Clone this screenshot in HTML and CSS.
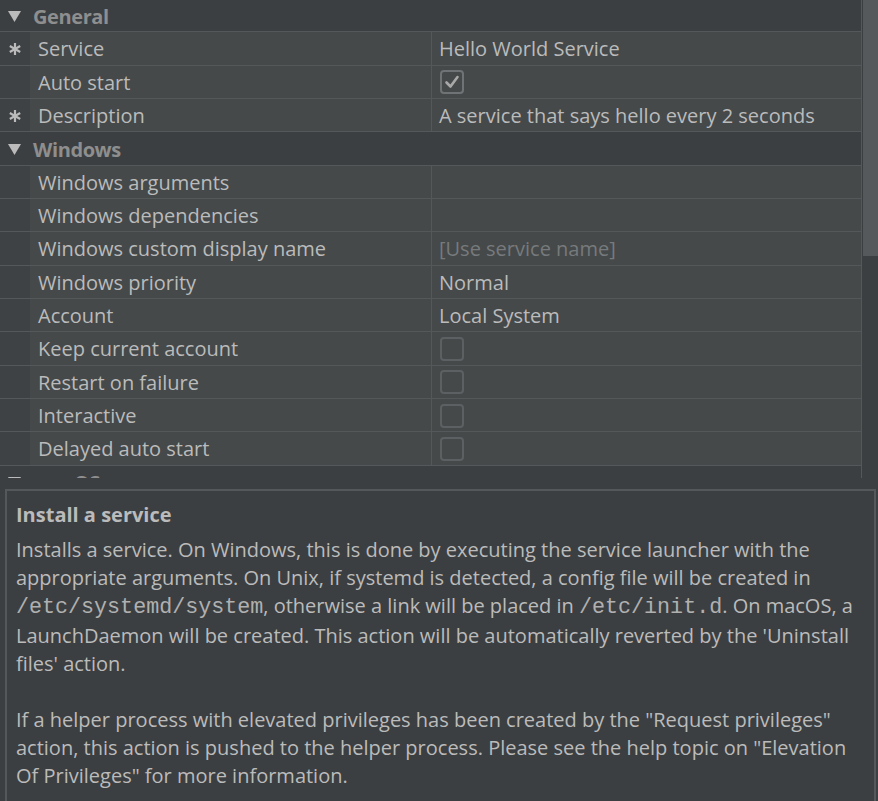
FILE: index.html
```html
<!DOCTYPE html>
<html>
<head>
<meta charset="utf-8">
<link rel="stylesheet" href="styles.css">
</head>
<body>
<div class="app">
  <div class="table-pane">
    <div class="table-scroll">
      <div class="table-inner">
        <div class="hdr"><svg class="tri" viewBox="0 0 12 12"><polygon points="0,1 12,1 6,11"/></svg><span>General</span></div>
        <div class="row"><div class="gut"><svg class="ast" viewBox="0 0 14 14"><g><line x1="7" y1="1" x2="7" y2="13"/><line x1="1.8" y1="4" x2="12.2" y2="10"/><line x1="1.8" y1="10" x2="12.2" y2="4"/></g></svg></div><div class="name">Service</div><div class="val">Hello World Service</div></div>
        <div class="row"><div class="gut"></div><div class="name">Auto start</div><div class="val"><span class="cb on"><svg viewBox="0 0 20 20"><polyline points="4.5,10.5 8.5,14.5 15.5,5"/></svg></span></div></div>
        <div class="row"><div class="gut"><svg class="ast" viewBox="0 0 14 14"><g><line x1="7" y1="1" x2="7" y2="13"/><line x1="1.8" y1="4" x2="12.2" y2="10"/><line x1="1.8" y1="10" x2="12.2" y2="4"/></g></svg></div><div class="name">Description</div><div class="val">A service that says hello every 2 seconds</div></div>
        <div class="hdr"><svg class="tri" viewBox="0 0 12 12"><polygon points="0,1 12,1 6,11"/></svg><span>Windows</span></div>
        <div class="row"><div class="gut"></div><div class="name">Windows arguments</div><div class="val"></div></div>
        <div class="row"><div class="gut"></div><div class="name">Windows dependencies</div><div class="val"></div></div>
        <div class="row"><div class="gut"></div><div class="name">Windows custom display name</div><div class="val dim">[Use service name]</div></div>
        <div class="row"><div class="gut"></div><div class="name">Windows priority</div><div class="val">Normal</div></div>
        <div class="row"><div class="gut"></div><div class="name">Account</div><div class="val">Local System</div></div>
        <div class="row"><div class="gut"></div><div class="name">Keep current account</div><div class="val"><span class="cb"></span></div></div>
        <div class="row"><div class="gut"></div><div class="name">Restart on failure</div><div class="val"><span class="cb"></span></div></div>
        <div class="row"><div class="gut"></div><div class="name">Interactive</div><div class="val"><span class="cb"></span></div></div>
        <div class="row"><div class="gut"></div><div class="name">Delayed auto start</div><div class="val"><span class="cb"></span></div></div>
        <div class="hdr"><svg class="tri" viewBox="0 0 12 12"><polygon points="0,1 12,1 6,11"/></svg><span>macOS</span></div>
      </div>
    </div>
    <div class="scrollbar"><div class="thumb"></div></div>
  </div>
  <div class="help">
    <div class="title">Install a service</div>
    <p>Installs a service. On Windows, this is done by executing the service launcher with the<br>appropriate arguments. On Unix, if systemd is detected, a config file will be created in<br><code>/etc/systemd/system</code>, otherwise a link will be placed in <code>/etc/init.d</code>. On macOS, a<br>LaunchDaemon will be created. This action will be automatically reverted by the 'Uninstall<br>files' action.</p>
    <p class="p2">If a helper process with elevated privileges has been created by the "Request privileges"<br>action, this action is pushed to the helper process. Please see the help topic on "Elevation<br>Of Privileges" for more information.</p>
  </div>
</div>
</body>
</html>
```

FILE: styles.css
```css
html, body {
  margin: 0;
  padding: 0;
  background: #3c3f41;
}
body {
  font-family: "Open Sans", "Noto Sans", sans-serif;
  font-size: 20px;
  color: #bbbbbb;
}
.app {
  width: 878px;
  height: 801px;
  display: flex;
  flex-direction: column;
  overflow: hidden;
}
.table-pane {
  height: 478px;
  display: flex;
  flex: none;
}
.table-scroll {
  width: 862px;
  overflow: hidden;
  border-right: 1px solid #55585a;
  box-sizing: border-box;
}
.table-inner {
  margin-top: -1px;
}
.hdr {
  height: 33.33px;
  box-sizing: border-box;
  border-bottom: 1px solid #55585a;
  display: flex;
  align-items: center;
  background: #3c3f41;
  padding-top: 2px;
}
.hdr .tri {
  width: 13px;
  height: 13px;
  margin-left: 8px;
  margin-right: 12px;
  fill: #bbbbbb;
}
.hdr span {
  font-weight: 700;
  color: #8e8e8e;
  letter-spacing: -0.4px;
}
.row {
  height: 33.33px;
  box-sizing: border-box;
  border-bottom: 1px solid #55585a;
  display: grid;
  grid-template-columns: 30px 401px 1fr;
  background: #45494a;
}
.gut {
  background: #3e4244;
  display: flex;
  align-items: center;
  justify-content: center;
  padding-top: 2px;
}
.ast {
  width: 14px;
  height: 14px;
  stroke: #bbbbbb;
  stroke-width: 2.2;
}
.name {
  padding-left: 8px;
  padding-top: 1px;
  display: flex;
  align-items: center;
  white-space: nowrap;
}
.val {
  border-left: 1px solid #55585a;
  padding-left: 7px;
  padding-top: 1px;
  display: flex;
  align-items: center;
  white-space: nowrap;
}
.val.dim {
  color: #777a7c;
}
.cb {
  width: 20px;
  height: 20px;
  border: 2px solid #5d6062;
  border-radius: 4px;
  margin-left: 1px;
  display: block;
}
.cb.on {
  border-color: #707375;
}
.cb svg {
  width: 20px;
  height: 20px;
  fill: none;
  stroke: #a8a8a8;
  stroke-width: 2.6;
  stroke-linecap: round;
  stroke-linejoin: round;
  display: block;
}
.scrollbar {
  width: 16px;
  flex: none;
  background: #3c3f41;
  padding-left: 1px;
  box-sizing: border-box;
}
.thumb {
  height: 256px;
  background: #56595b;
}
.help {
  margin: 11px 2px 4px 5px;
  flex: 1;
  border: 2px solid #55585a;
  background: #3c3f41;
  padding: 10px 9px 0 9px;
}
.title {
  font-weight: 700;
  line-height: 28px;
  margin-bottom: 7px;
}
.help p {
  margin: 0 0 28px 0;
  line-height: 28px;
  white-space: nowrap;
}
code {
  font-family: "Liberation Mono", monospace;
  font-size: 21.7px;
  color: #b0b0b0;
}
```
